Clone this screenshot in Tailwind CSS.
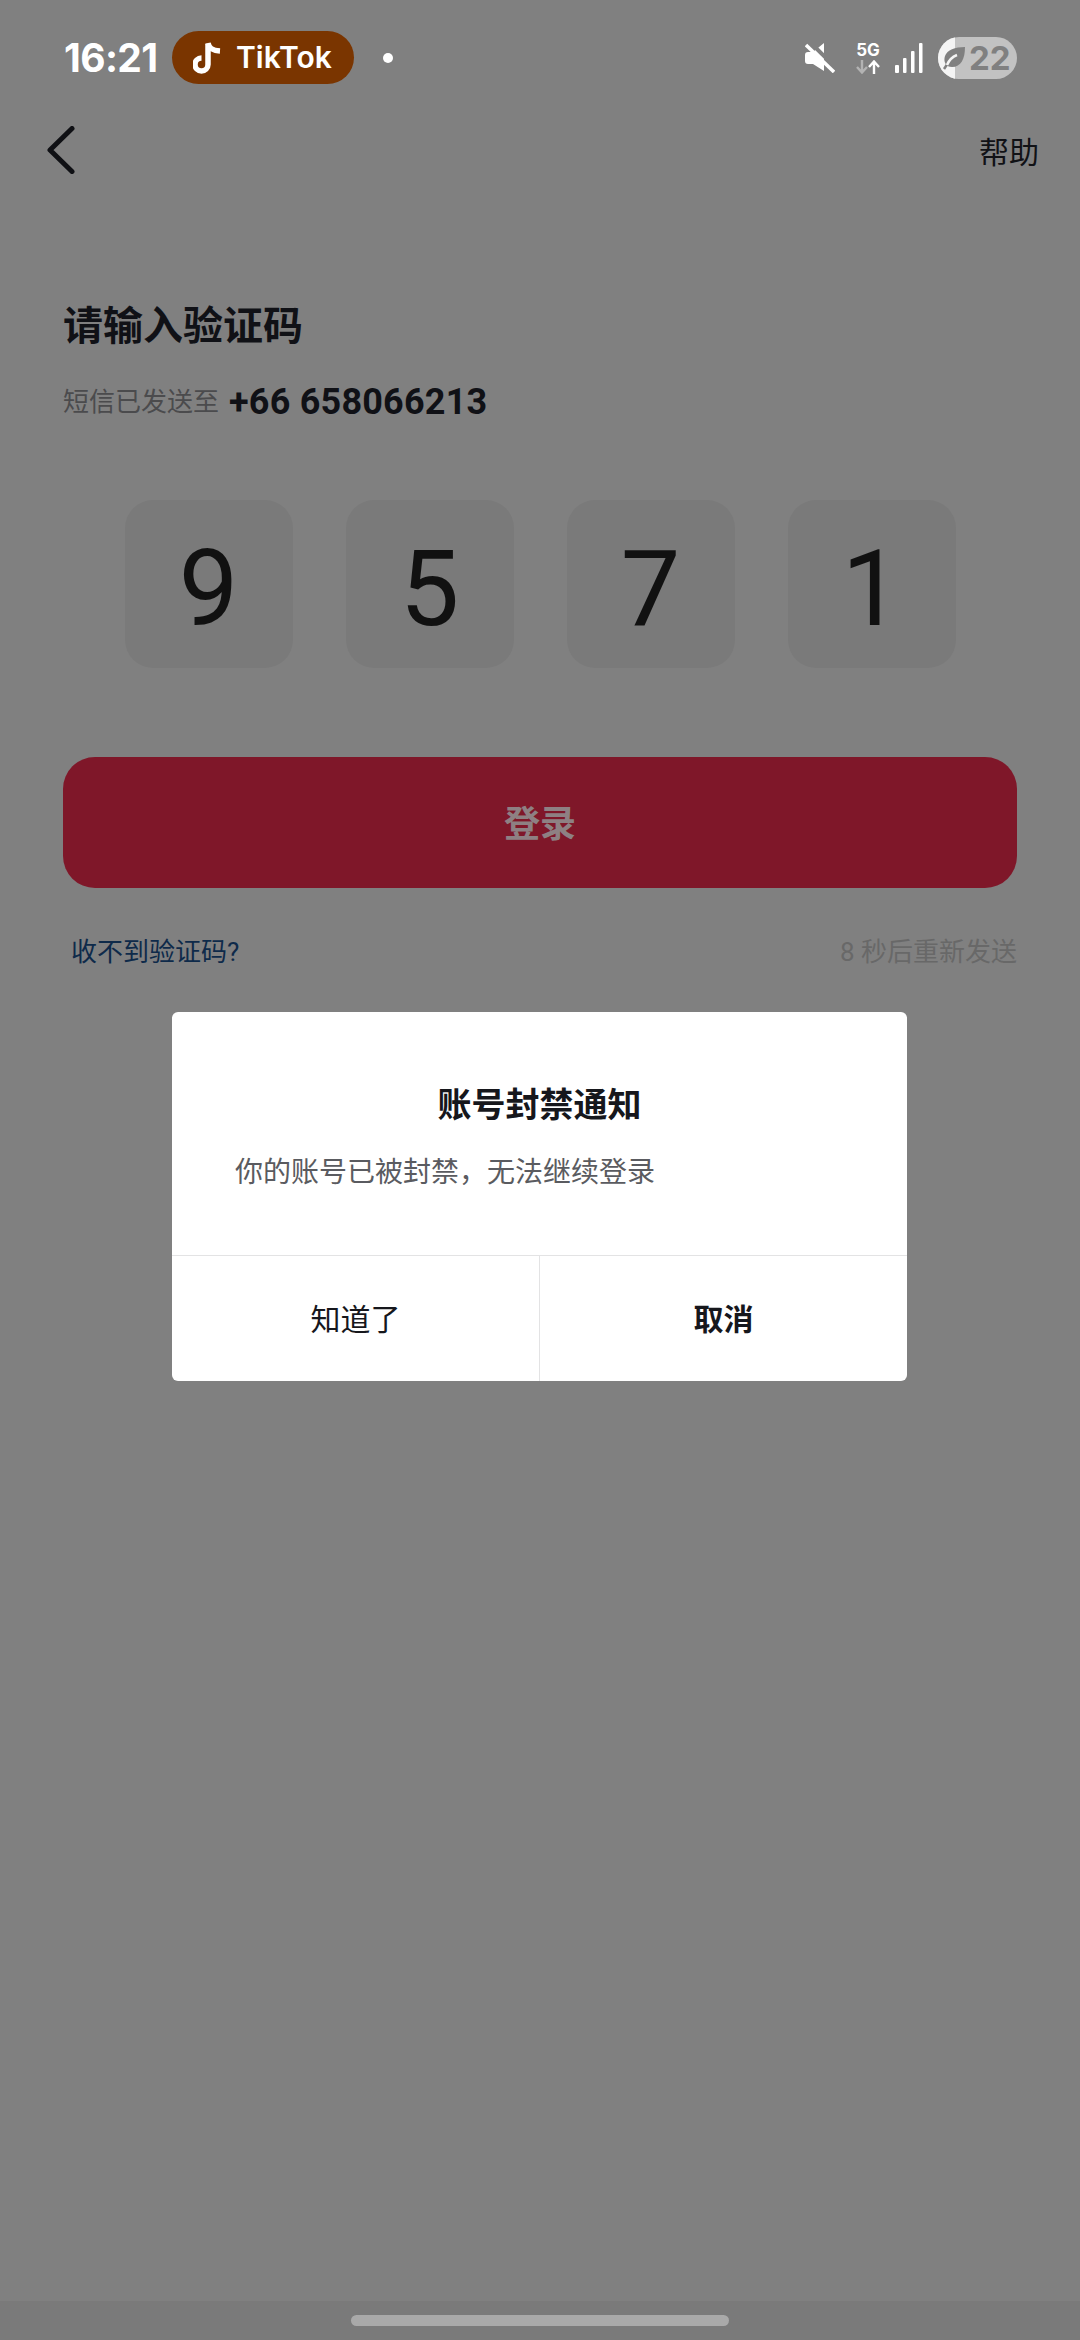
<!DOCTYPE html>
<html lang="zh-CN">
  <head>
    <meta charset="UTF-8" />
    <meta name="viewport" content="width=device-width, initial-scale=1.0" />
    <title>请输入验证码</title>
    <script src="https://cdn.jsdelivr.net/npm/@tailwindcss/browser@4"></script>
  </head>
  <body class="bg-[#808080]">
    <div class="relative w-[1080px] h-[2340px] flex flex-col overflow-hidden bg-[#808080] font-['Roboto','Noto_Sans_CJK_SC',sans-serif]">
      <!-- status bar -->
      <div class="flex items-center justify-between h-[53px] mt-[31px] pl-[64px] pr-[63px] shrink-0">
        <div class="flex items-center">
          <span class="w-[94px] text-[39px] leading-[53px] font-bold text-white tracking-[-0.6px] font-['Inter',sans-serif]">16:21</span>
          <div class="ml-[14px] w-[182px] h-[53px] rounded-full bg-[#7a3500] flex items-center pl-[21px]">
            <svg class="w-[28px] h-[32px]" viewBox="0 0 28 32" fill="none">
              <path d="M15 2v20.500a6.500 6.500 0 1 1-6.500-6.500" stroke="#fff" stroke-width="5.500" />
              <path d="M15 1c1 5 4 7.500 12 8" stroke="#fff" stroke-width="5.500" />
            </svg>
            <span class="ml-[15px] text-[30px] leading-[53px] font-semibold text-white font-['Inter',sans-serif]">TikTok</span>
          </div>
          <span class="ml-[29px] w-[10px] h-[10px] rounded-full bg-white"></span>
        </div>
        <div class="flex items-center">
          <svg class="w-[30px] h-[30px]" viewBox="0 0 30 30" fill="#fff">
            <path d="M3 9h5L19 0v28L8 21H3a3 3 0 0 1-3-3v-6a3 3 0 0 1 3-3z" />
            <path d="M5-1l27 27" stroke="#808080" stroke-width="4" />
            <path d="M19 16v14h11V16z" fill="#808080" />
            <path d="M1 2l28 27" stroke="#fff" stroke-width="3.500" />
          </svg>
          <div class="ml-[21px] w-[24px] flex flex-col items-center">
            <span class="text-[17px] leading-[16px] font-bold text-white font-['Inter',sans-serif]">5G</span>
            <svg class="mt-[2px] w-[24px] h-[14px]" viewBox="0 0 24 14" fill="none" stroke-width="2.400">
              <path d="M6 0v12M1 7l5 5.500 5-5.500" stroke="#b3b3b3" />
              <path d="M18 14V2M13 7l5-5.500 5 5.500" stroke="#fff" />
            </svg>
          </div>
          <svg class="ml-[15px] w-[28px] h-[30px]" viewBox="0 0 28 30" fill="#fff">
            <rect x="0" y="22" width="4" height="8" rx="1" />
            <rect x="8" y="15" width="3.500" height="15" rx="1" />
            <rect x="16" y="8" width="3.500" height="22" rx="1" />
            <rect x="24" y="0" width="3.500" height="30" rx="1" />
          </svg>
          <div class="relative ml-[15px] w-[79px] h-[42px] rounded-full bg-[#c2c2c2] overflow-hidden flex items-center">
            <div class="absolute left-0 top-0 w-[17px] h-full bg-[#f4f4f4]"></div>
            <svg class="relative ml-[5px] w-[22px] h-[24px]" viewBox="0 0 22 24">
              <path d="M22 1C22 13 18 21 9 21 3 21 0 16 2 10 4 4 12 1 22 1z" fill="#808080" />
              <path d="M1 23l3-4.500" stroke="#808080" stroke-width="2.500" />
              <path d="M4 19C6 14 9 11 14 9" fill="none" stroke="#f4f4f4" stroke-width="2.500" />
            </svg>
            <span class="relative ml-[4px] text-[33px] leading-[42px] font-bold text-[#808080] font-['Inter',sans-serif]">22</span>
          </div>
        </div>
      </div>

      <!-- nav bar -->
      <div class="flex items-center justify-between mt-[42px] h-[48px] pl-[47px] pr-[41px] shrink-0">
        <svg class="w-[28px] h-[48px]" viewBox="0 0 28 48" fill="none">
          <path d="M25 2.500 3 24l22 21.500" stroke="#0f1014" stroke-width="5" stroke-linecap="round" stroke-linejoin="round" />
        </svg>
        <span class="pt-[6px] text-[30px] leading-[48px] text-[#111216]">帮助</span>
      </div>

      <!-- form -->
      <div class="flex flex-col px-[63px] shrink-0">
        <h1 class="mt-[129px] text-[40px] leading-[48px] font-semibold text-[#101116]">请输入验证码</h1>
        <div class="mt-[27px] flex items-center h-[48px]">
          <span class="text-[26px] leading-[48px] text-[#4b4b4d]">短信已发送至</span>
          <span class="ml-[10px] text-[36px] leading-[48px] font-bold text-[#101116] tracking-[0.2px]">+66 658066213</span>
        </div>
        <div class="mt-[74px] flex justify-center gap-[53px]">
          <div class="w-[168px] h-[168px] pt-[9px] rounded-[28px] bg-[#7a7a7a] flex items-center justify-center text-[106px] leading-none text-[#111111]">9</div>
          <div class="w-[168px] h-[168px] pt-[9px] rounded-[28px] bg-[#7a7a7a] flex items-center justify-center text-[106px] leading-none text-[#111111]">5</div>
          <div class="w-[168px] h-[168px] pt-[9px] rounded-[28px] bg-[#7a7a7a] flex items-center justify-center text-[106px] leading-none text-[#111111]">7</div>
          <div class="w-[168px] h-[168px] pt-[9px] rounded-[28px] bg-[#7a7a7a] flex items-center justify-center text-[106px] leading-none text-[#111111]">1</div>
        </div>
        <button class="mt-[89px] w-[954px] h-[131px] pt-[5px] rounded-[32px] bg-[#7f1729] text-[36px] font-semibold text-[#8e8083]">登录</button>
        <div class="mt-[44px] flex items-center justify-between h-[40px]">
          <span class="ml-[8px] text-[26px] leading-[40px] text-[#0e2a4a]">收不到验证码?</span>
          <span class="text-[26px] leading-[40px] text-[#686868]">8 秒后重新发送</span>
        </div>
      </div>

      <!-- ban dialog -->
      <div class="absolute left-[172px] top-[1012px] w-[735px] h-[369px] rounded-[6px] bg-white flex flex-col overflow-hidden">
        <div class="h-[243px] flex flex-col px-[63px]">
          <h2 class="mt-[69px] text-center text-[34px] leading-[48px] font-semibold text-[#16171c]">账号封禁通知</h2>
          <p class="mt-[24px] text-[28px] leading-[40px] text-[#5a5b60]">你的账号已被封禁，无法继续登录</p>
        </div>
        <div class="flex-1 flex border-t border-[#e3e3e4]">
          <div class="flex-1 flex items-center justify-center pt-[2px] text-[30px] text-[#16171c] border-r border-[#e3e3e4]">知道了</div>
          <div class="flex-1 flex items-center justify-center pt-[2px] text-[30px] font-semibold text-[#16171c]">取消</div>
        </div>
      </div>

      <!-- gesture bar -->
      <div class="mt-auto h-[39px] bg-[#7a7a7a] flex justify-center pt-[14px] shrink-0">
        <div class="w-[378px] h-[11px] rounded-full bg-[#a9a9a9]"></div>
      </div>
    </div>
  </body>
</html>
